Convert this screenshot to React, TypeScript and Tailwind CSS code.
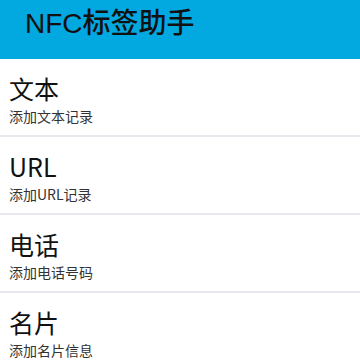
import React from "react";

const items = [
  { t: "文本", s: "添加文本记录" },
  { t: "URL", s: "添加URL记录" },
  { t: "电话", s: "添加电话号码" },
  { t: "名片", s: "添加名片信息" },
];

export default function App() {
  return (
    <div className="w-[360px] h-[360px] overflow-hidden bg-white" style={{ fontFamily: '"Noto Sans CJK SC", sans-serif' }}>
      <div className="h-[59px] bg-[#02a8e0] flex items-start pl-[25px] pt-[10px]">
        <span className="text-[28px] leading-none font-medium text-[#111]" style={{ fontFamily: '"Liberation Sans", "Noto Sans CJK SC", sans-serif' }}>NFC标签助手</span>
      </div>
      {items.map((it, i) => (
        <div key={i}>
          <div className="h-[76px] pl-[9px] pt-[14px]">
            <div className="text-[25px] leading-[30px] text-[#111]">{it.t}</div>
            <div className="mt-[3px] text-[14px] leading-[20px] text-[#333]">{it.s}</div>
          </div>
          <div className="h-[2px] bg-[#e9e8ee]" />
        </div>
      ))}
    </div>
  );
}
